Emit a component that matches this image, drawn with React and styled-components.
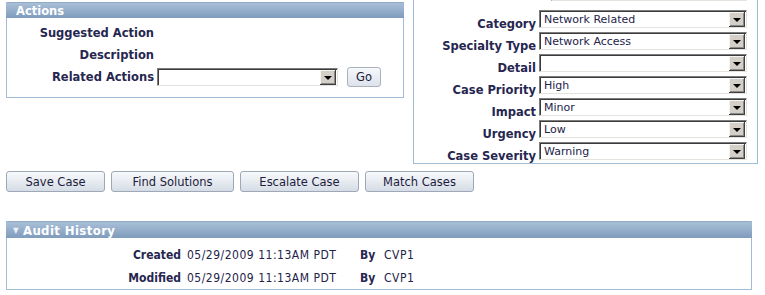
import React from 'react';
import styled, { createGlobalStyle } from 'styled-components';

const GlobalStyle = createGlobalStyle`
  body {
    margin: 0;
    background: #ffffff;
    font-family: "DejaVu Sans", Verdana, sans-serif;
    font-size: 11px;
  }
`;

const Page = styled.div`
  width: 765px;
  height: 295px;
  overflow: hidden;
  position: relative;
`;

const TopRow = styled.div`
  display: flex;
  align-items: flex-start;
`;

const Panel = styled.div`
  border: 1px solid #a3bcd6;
  border-top: none;
  background: #fff;
  box-sizing: border-box;
`;

const PanelHeader = styled.div`
  height: ${props => props.h || 15}px;
  display: flex;
  align-items: center;
  padding-left: ${props => props.pad || 10}px;
  background: linear-gradient(#a9bfd7, #7f9cbd);
  border-top: 1px solid #8fa9c6;
  border-radius: 2px 2px 0 0;
  margin: 0 -1px;
  color: #fff;
  font-weight: bold;
  font-size: ${props => props.fs || 11.5}px;
  letter-spacing: ${props => props.ls || 0}px;
`;

const ActionsPanel = styled(Panel)`
  margin: 2px 0 0 6px;
  width: 398px;
  height: 96px;
`;

const ActionsGrid = styled.div`
  display: grid;
  grid-template-columns: 147px auto;
  grid-auto-rows: 22px;
  column-gap: 3px;
  align-items: center;
  padding-top: 4px;
`;

const Label = styled.div`
  text-align: right;
  font-weight: bold;
  font-size: 11.5px;
  color: #262650;
  white-space: nowrap;
`;

const FieldLine = styled.div`
  display: flex;
  align-items: center;
  gap: 9px;
`;

const SelectBox = styled.div`
  width: ${props => props.w}px;
  height: 18px;
  box-sizing: border-box;
  display: flex;
  align-items: center;
  justify-content: space-between;
  background: #fff;
  border: 1px solid;
  border-color: #7c7c7c #e4e2dc #e4e2dc #7c7c7c;
  box-shadow: inset 1px 1px 0 #3c3c3c;
  padding: 1px 1px 1px 4px;
  color: #23234a;
  white-space: nowrap;
`;

const Arrow = styled.div`
  width: 16px;
  height: 15px;
  box-sizing: border-box;
  background: #d4d0c8;
  box-shadow: inset -1px -1px 0 #404040, inset 1px 1px 0 #f4f4f4, inset -2px -2px 0 #8a8a8a;
  display: flex;
  align-items: center;
  justify-content: center;
  &::after {
    content: '';
    border-left: 4px solid transparent;
    border-right: 4px solid transparent;
    border-top: 4px solid #000;
    margin: 1px 1px 0 0;
  }
`;

const SmallButton = styled.div`
  height: 18px;
  padding: 0 8px;
  display: flex;
  align-items: center;
  justify-content: center;
  border: 1px solid #a9b1bd;
  border-radius: 3px;
  background: linear-gradient(#f6f8fb, #dde3ec);
  color: #1c1c3c;
  font-size: 11.5px;
`;

const DetailPanel = styled(Panel)`
  margin: -24px 0 0 9px;
  width: 345px;
  padding: 0 10px 3px 0;
`;

const DetailRow = styled.div`
  display: flex;
  align-items: flex-end;
  justify-content: flex-end;
  height: ${props => props.h || 22}px;
  gap: 3px;
`;

const DetailLabel = styled(Label)`
  line-height: 13px;
  margin-bottom: -3px;
`;

const ButtonBar = styled.div`
  display: flex;
  gap: 6px;
  margin: 7px 0 0 6px;
`;

const ActionButton = styled.div`
  width: ${props => props.w}px;
  height: 21px;
  box-sizing: border-box;
  display: flex;
  align-items: center;
  justify-content: center;
  border: 1px solid #9ea8b6;
  border-radius: 3px;
  background: linear-gradient(#f7f9fb 0%, #e9edf2 45%, #d5dce6 100%);
  color: #1c1c3c;
  font-size: 11.5px;
`;

const AuditPanel = styled(Panel)`
  margin: 29px 0 0 6px;
  width: 746px;
  height: 69px;
  font-family: "DejaVu Sans Condensed", "DejaVu Sans", sans-serif;
  font-stretch: condensed;
`;

const Caret = styled.span`
  font-size: 8px;
  margin-right: 4px;
  color: #e8eef5;
`;

const AuditGrid = styled.div`
  display: grid;
  grid-template-columns: 174px 167px 18px auto;
  grid-auto-rows: 23px;
  column-gap: 6px;
  align-items: center;
  padding-top: 5px;
  font-size: 12px;
  letter-spacing: 0.5px;
  color: #23234a;
`;

const AuditLabel = styled.div`
  font-weight: bold;
  letter-spacing: 0;
  text-align: ${props => (props.left ? 'left' : 'right')};
  color: #262650;
`;

const detailRows = [
  ['Category', 'Network Related'],
  ['Specialty Type', 'Network Access'],
  ['Detail', ''],
  ['Case Priority', 'High'],
  ['Impact', 'Minor'],
  ['Urgency', 'Low'],
  ['Case Severity', 'Warning'],
];

const buttons = [
  ['Save Case', 99],
  ['Find Solutions', 123],
  ['Escalate Case', 119],
  ['Match Cases', 109],
];

const audit = [
  ['Created', '05/29/2009 11:13AM PDT', 'CVP1'],
  ['Modified', '05/29/2009 11:13AM PDT', 'CVP1'],
];

const App = () => (
  <Page>
    <GlobalStyle />
    <TopRow>
      <ActionsPanel>
        <PanelHeader>Actions</PanelHeader>
        <ActionsGrid>
          <Label>Suggested Action</Label>
          <div />
          <Label>Description</Label>
          <div />
          <Label>Related Actions</Label>
          <FieldLine>
            <SelectBox w={181}>
              <span />
              <Arrow />
            </SelectBox>
            <SmallButton>Go</SmallButton>
          </FieldLine>
        </ActionsGrid>
      </ActionsPanel>
      <DetailPanel>
        <DetailRow h={25}>
          <SelectBox w={196} />
        </DetailRow>
        {detailRows.map(([label, value], i) => (
          <DetailRow key={label} h={i === 0 ? 27 : 22}>
            <DetailLabel>{label}</DetailLabel>
            <SelectBox w={208}>
              <span>{value}</span>
              <Arrow />
            </SelectBox>
          </DetailRow>
        ))}
      </DetailPanel>
    </TopRow>
    <ButtonBar>
      {buttons.map(([text, w]) => (
        <ActionButton key={text} w={w}>{text}</ActionButton>
      ))}
    </ButtonBar>
    <AuditPanel>
      <PanelHeader h={16} pad={7} fs={13} ls={0.4}>
        <Caret>▼</Caret>Audit History
      </PanelHeader>
      <AuditGrid>
        {audit.map(([label, when, by]) => (
          <React.Fragment key={label}>
            <AuditLabel>{label}</AuditLabel>
            <div>{when}</div>
            <AuditLabel left>By</AuditLabel>
            <div>{by}</div>
          </React.Fragment>
        ))}
      </AuditGrid>
    </AuditPanel>
  </Page>
);

export default App;
